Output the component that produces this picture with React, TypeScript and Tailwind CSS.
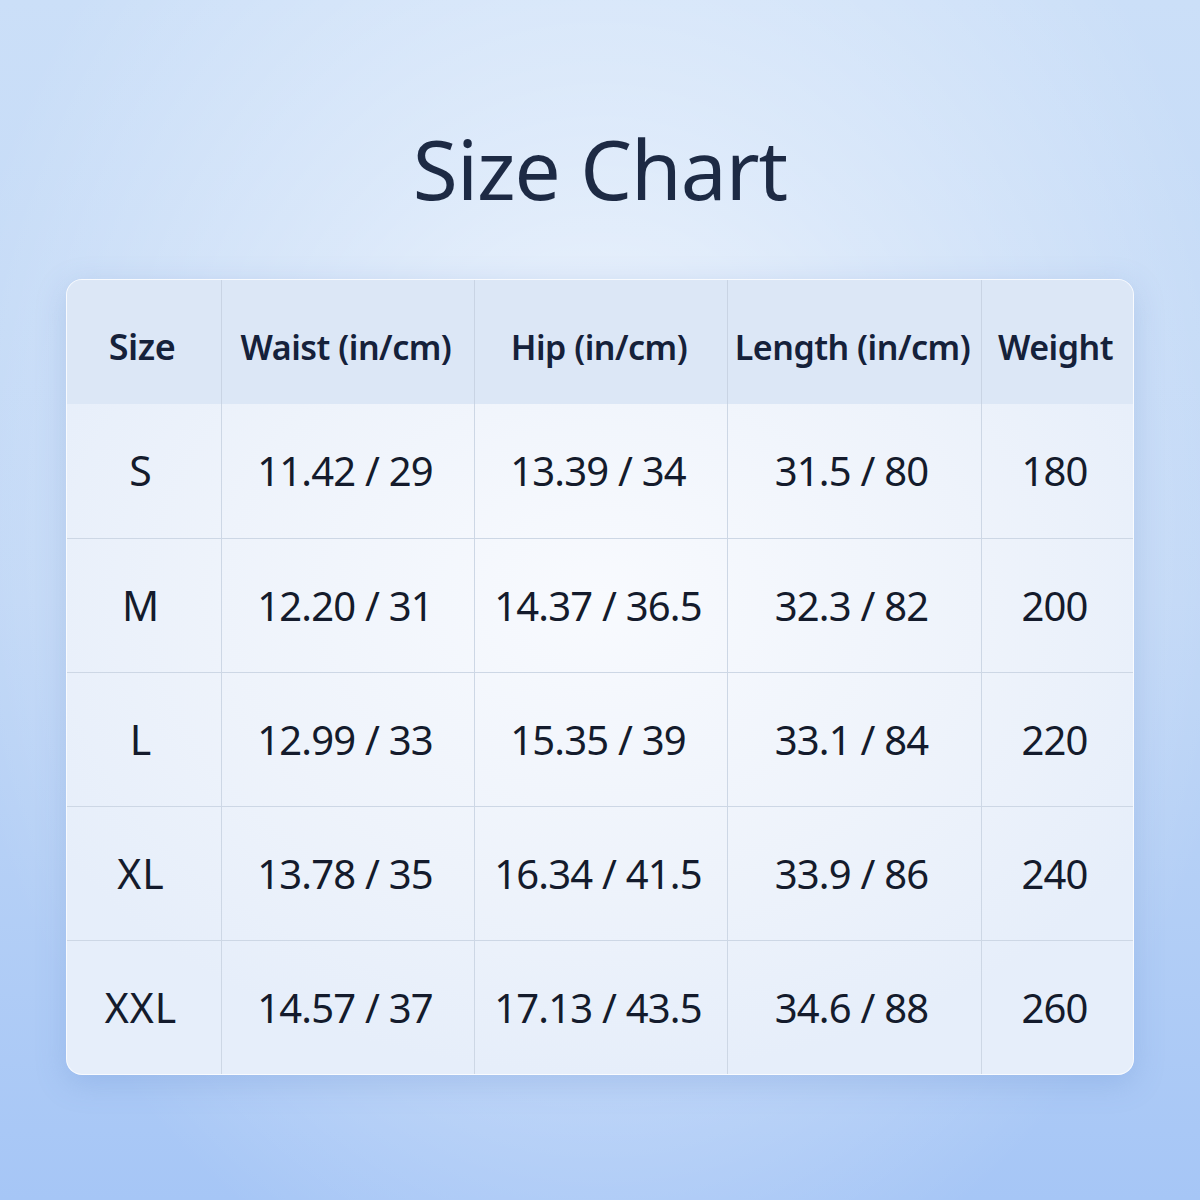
import React from "react";

const rows = [
  ["S", "11.42 / 29", "13.39 / 34", "31.5 / 80", "180"],
  ["M", "12.20 / 31", "14.37 / 36.5", "32.3 / 82", "200"],
  ["L", "12.99 / 33", "15.35 / 39", "33.1 / 84", "220"],
  ["XL", "13.78 / 35", "16.34 / 41.5", "33.9 / 86", "240"],
  ["XXL", "14.57 / 37", "17.13 / 43.5", "34.6 / 88", "260"],
];

const headers = ["Size", "Waist (in/cm)", "Hip (in/cm)", "Length (in/cm)", "Weight"];
const cols = "grid-cols-[154px_253px_253px_254px_152px]";

export default function App() {
  return (
    <div
      className="w-[1200px] h-[1200px] overflow-hidden flex flex-col items-center bg-[radial-gradient(ellipse_55%_70%_at_50%_42%,rgba(255,255,255,0.75)_0%,rgba(255,255,255,0.35)_50%,rgba(255,255,255,0)_100%),linear-gradient(180deg,#cbdff8_0%,#c0d7f6_50%,#a6c6f6_100%)]"
      style={{ fontFamily: '"Noto Sans", "Open Sans", sans-serif' }}
    >
      <h1 className="mt-[112px] h-[112px] text-[82px] leading-[112px] tracking-[-1px] text-[#1d2a44] font-normal">
        Size Chart
      </h1>
      <div className="mt-[55px] w-[1068px] rounded-[16px] overflow-hidden border border-white/70 shadow-[0_8px_30px_rgba(90,130,200,0.25)] bg-[radial-gradient(ellipse_60%_60%_at_50%_40%,#f8fafe_0%,#eef3fb_60%,#e6eefa_100%)]">
        <div className={`grid ${cols} h-[124px] bg-[#dce7f6]`}>
          {headers.map((h, i) => (
            <div
              key={h}
              className={`flex items-center justify-center pt-[10px] pr-[4px] text-[#15213a] font-semibold tracking-[-0.5px] ${i === 0 ? "text-[36px]" : "text-[34px]"} ${i > 0 ? "border-l border-[#c9d4e4]" : ""}`}
            >
              {h}
            </div>
          ))}
        </div>
        {rows.map((r, ri) => (
          <div
            key={r[0]}
            className={`grid ${cols} h-[134px] ${ri > 0 ? "border-t border-[#cdd7e5]" : ""}`}
          >
            {r.map((c, ci) => (
              <div
                key={ci}
                className={`flex items-center justify-center pr-[6px] text-[#141b2c] ${ci === 0 ? "text-[41px] tracking-[1px]" : "text-[40px] tracking-[-0.8px]"} ${ci > 0 ? "border-l border-[#cdd7e5]" : ""}`}
              >
                {c}
              </div>
            ))}
          </div>
        ))}
      </div>
    </div>
  );
}
